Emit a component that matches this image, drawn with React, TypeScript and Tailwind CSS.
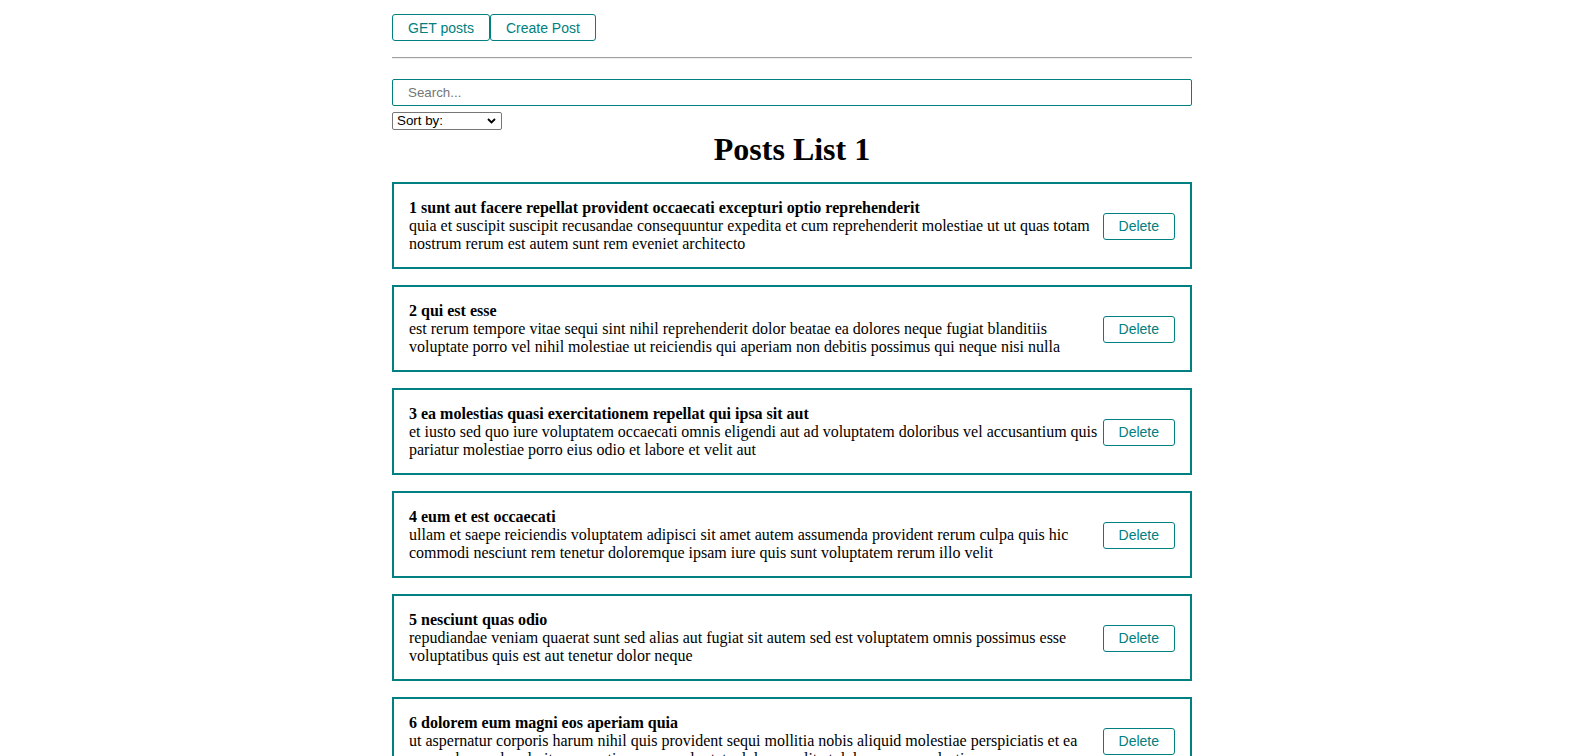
import { useState } from 'react'

type Post = {
  id: number
  title: string
  lines: string[]
}

// body text split where the list wraps it
const initialPosts: Post[] = [
  {
    id: 1,
    title: 'sunt aut facere repellat provident occaecati excepturi optio reprehenderit',
    lines: [
      'quia et suscipit suscipit recusandae consequuntur expedita et cum reprehenderit molestiae ut ut quas totam',
      'nostrum rerum est autem sunt rem eveniet architecto',
    ],
  },
  {
    id: 2,
    title: 'qui est esse',
    lines: [
      'est rerum tempore vitae sequi sint nihil reprehenderit dolor beatae ea dolores neque fugiat blanditiis',
      'voluptate porro vel nihil molestiae ut reiciendis qui aperiam non debitis possimus qui neque nisi nulla',
    ],
  },
  {
    id: 3,
    title: 'ea molestias quasi exercitationem repellat qui ipsa sit aut',
    lines: [
      'et iusto sed quo iure voluptatem occaecati omnis eligendi aut ad voluptatem doloribus vel accusantium quis',
      'pariatur molestiae porro eius odio et labore et velit aut',
    ],
  },
  {
    id: 4,
    title: 'eum et est occaecati',
    lines: [
      'ullam et saepe reiciendis voluptatem adipisci sit amet autem assumenda provident rerum culpa quis hic',
      'commodi nesciunt rem tenetur doloremque ipsam iure quis sunt voluptatem rerum illo velit',
    ],
  },
  {
    id: 5,
    title: 'nesciunt quas odio',
    lines: [
      'repudiandae veniam quaerat sunt sed alias aut fugiat sit autem sed est voluptatem omnis possimus esse',
      'voluptatibus quis est aut tenetur dolor neque',
    ],
  },
  {
    id: 6,
    title: 'dolorem eum magni eos aperiam quia',
    lines: [
      'ut aspernatur corporis harum nihil quis provident sequi mollitia nobis aliquid molestiae perspiciatis et ea',
      'nemo ab reprehenderit accusantium quas voluptate dolores velit et doloremque molestiae',
    ],
  },
  {
    id: 7,
    title: 'magnam facilis autem',
    lines: [
      'dolore placeat quibusdam ea quo vitae magni quis enim qui quis quo nemo aut saepe quidem repellat excepturi',
      'ut quia sunt ut sequi eos ea sed quas',
    ],
  },
]

function PostItem({ post, onDelete }: { post: Post; onDelete: (id: number) => void }) {
  return (
    <div className="flex items-center justify-between border-2 border-[#008080] px-[15px] pt-[15px] pb-[14px] font-['Liberation_Serif',serif] text-[16px] leading-[18px] text-black">
      <div className="min-w-0 flex-1">
        <strong className="block font-bold">
          {post.id} {post.title}
        </strong>
        <div>
          {post.lines.map((line, i) => (
            <span key={i} className="block">
              {line}
            </span>
          ))}
        </div>
      </div>
      <button
        onClick={() => onDelete(post.id)}
        className="h-[27px] shrink-0 rounded-[3px] border border-[#008080] bg-white px-[15px] font-['Liberation_Sans',Arial,sans-serif] text-[14px] leading-none text-[#008080]"
      >
        Delete
      </button>
    </div>
  )
}

export default function App() {
  const [posts, setPosts] = useState<Post[]>(initialPosts)
  const [query, setQuery] = useState('')
  const [sort, setSort] = useState('')

  const removePost = (id: number) => setPosts(posts.filter((p) => p.id !== id))

  const visible = posts.filter((p) => p.title.toLowerCase().includes(query.toLowerCase()))

  return (
    <div className="flex h-[756px] justify-center overflow-hidden bg-white pl-[6px]">
      <div className="w-[800px] pt-[14px]">
        {/* toolbar */}
        <div className="flex">
          <button className="h-[27px] rounded-[3px] border border-[#008080] bg-white px-[15px] font-['Liberation_Sans',Arial,sans-serif] text-[14px] leading-none text-[#008080]">
            GET posts
          </button>
          <button className="h-[27px] rounded-[3px] border border-[#008080] bg-white px-[15px] font-['Liberation_Sans',Arial,sans-serif] text-[14px] leading-none text-[#008080]">
            Create Post
          </button>
        </div>

        <hr className="mt-[16px] h-0 border-t border-b border-t-[#a0a0a0] border-b-[#eeeeee]" />

        {/* filters */}
        <input
          value={query}
          onChange={(e) => setQuery(e.target.value)}
          placeholder="Search..."
          className="mt-[20px] block h-[27px] w-full rounded-[2px] border border-[#008080] px-[15px] font-['Liberation_Sans',Arial,sans-serif] text-[13.33px] text-black outline-none placeholder:text-[#757575]"
        />
        <div className="relative mt-[6px] h-[18px] w-[110px]">
          <select
            value={sort}
            onChange={(e) => setSort(e.target.value)}
            className="block h-[18px] w-[110px] appearance-none rounded-[2px] border border-[#767676] bg-white pl-[4px] font-['Liberation_Sans',Arial,sans-serif] text-[13.33px] leading-none text-black"
          >
            <option value="" disabled>
              Sort by:
            </option>
            <option value="title">By title</option>
            <option value="body">By body</option>
          </select>
          <svg
            className="pointer-events-none absolute top-[6px] right-[6px]"
            width="9"
            height="6"
            viewBox="0 0 9 6"
            fill="none"
          >
            <path d="M1 1l3.5 3.5L8 1" stroke="#000" strokeWidth="1.8" />
          </svg>
        </div>

        <h1 className="mt-[1px] text-center font-['Liberation_Serif',serif] text-[32px] leading-[37px] font-bold text-black">
          Posts List 1
        </h1>

        <div className="mt-[14px] flex flex-col gap-[16px]">
          {visible.map((post) => (
            <PostItem key={post.id} post={post} onDelete={removePost} />
          ))}
        </div>
      </div>
    </div>
  )
}
